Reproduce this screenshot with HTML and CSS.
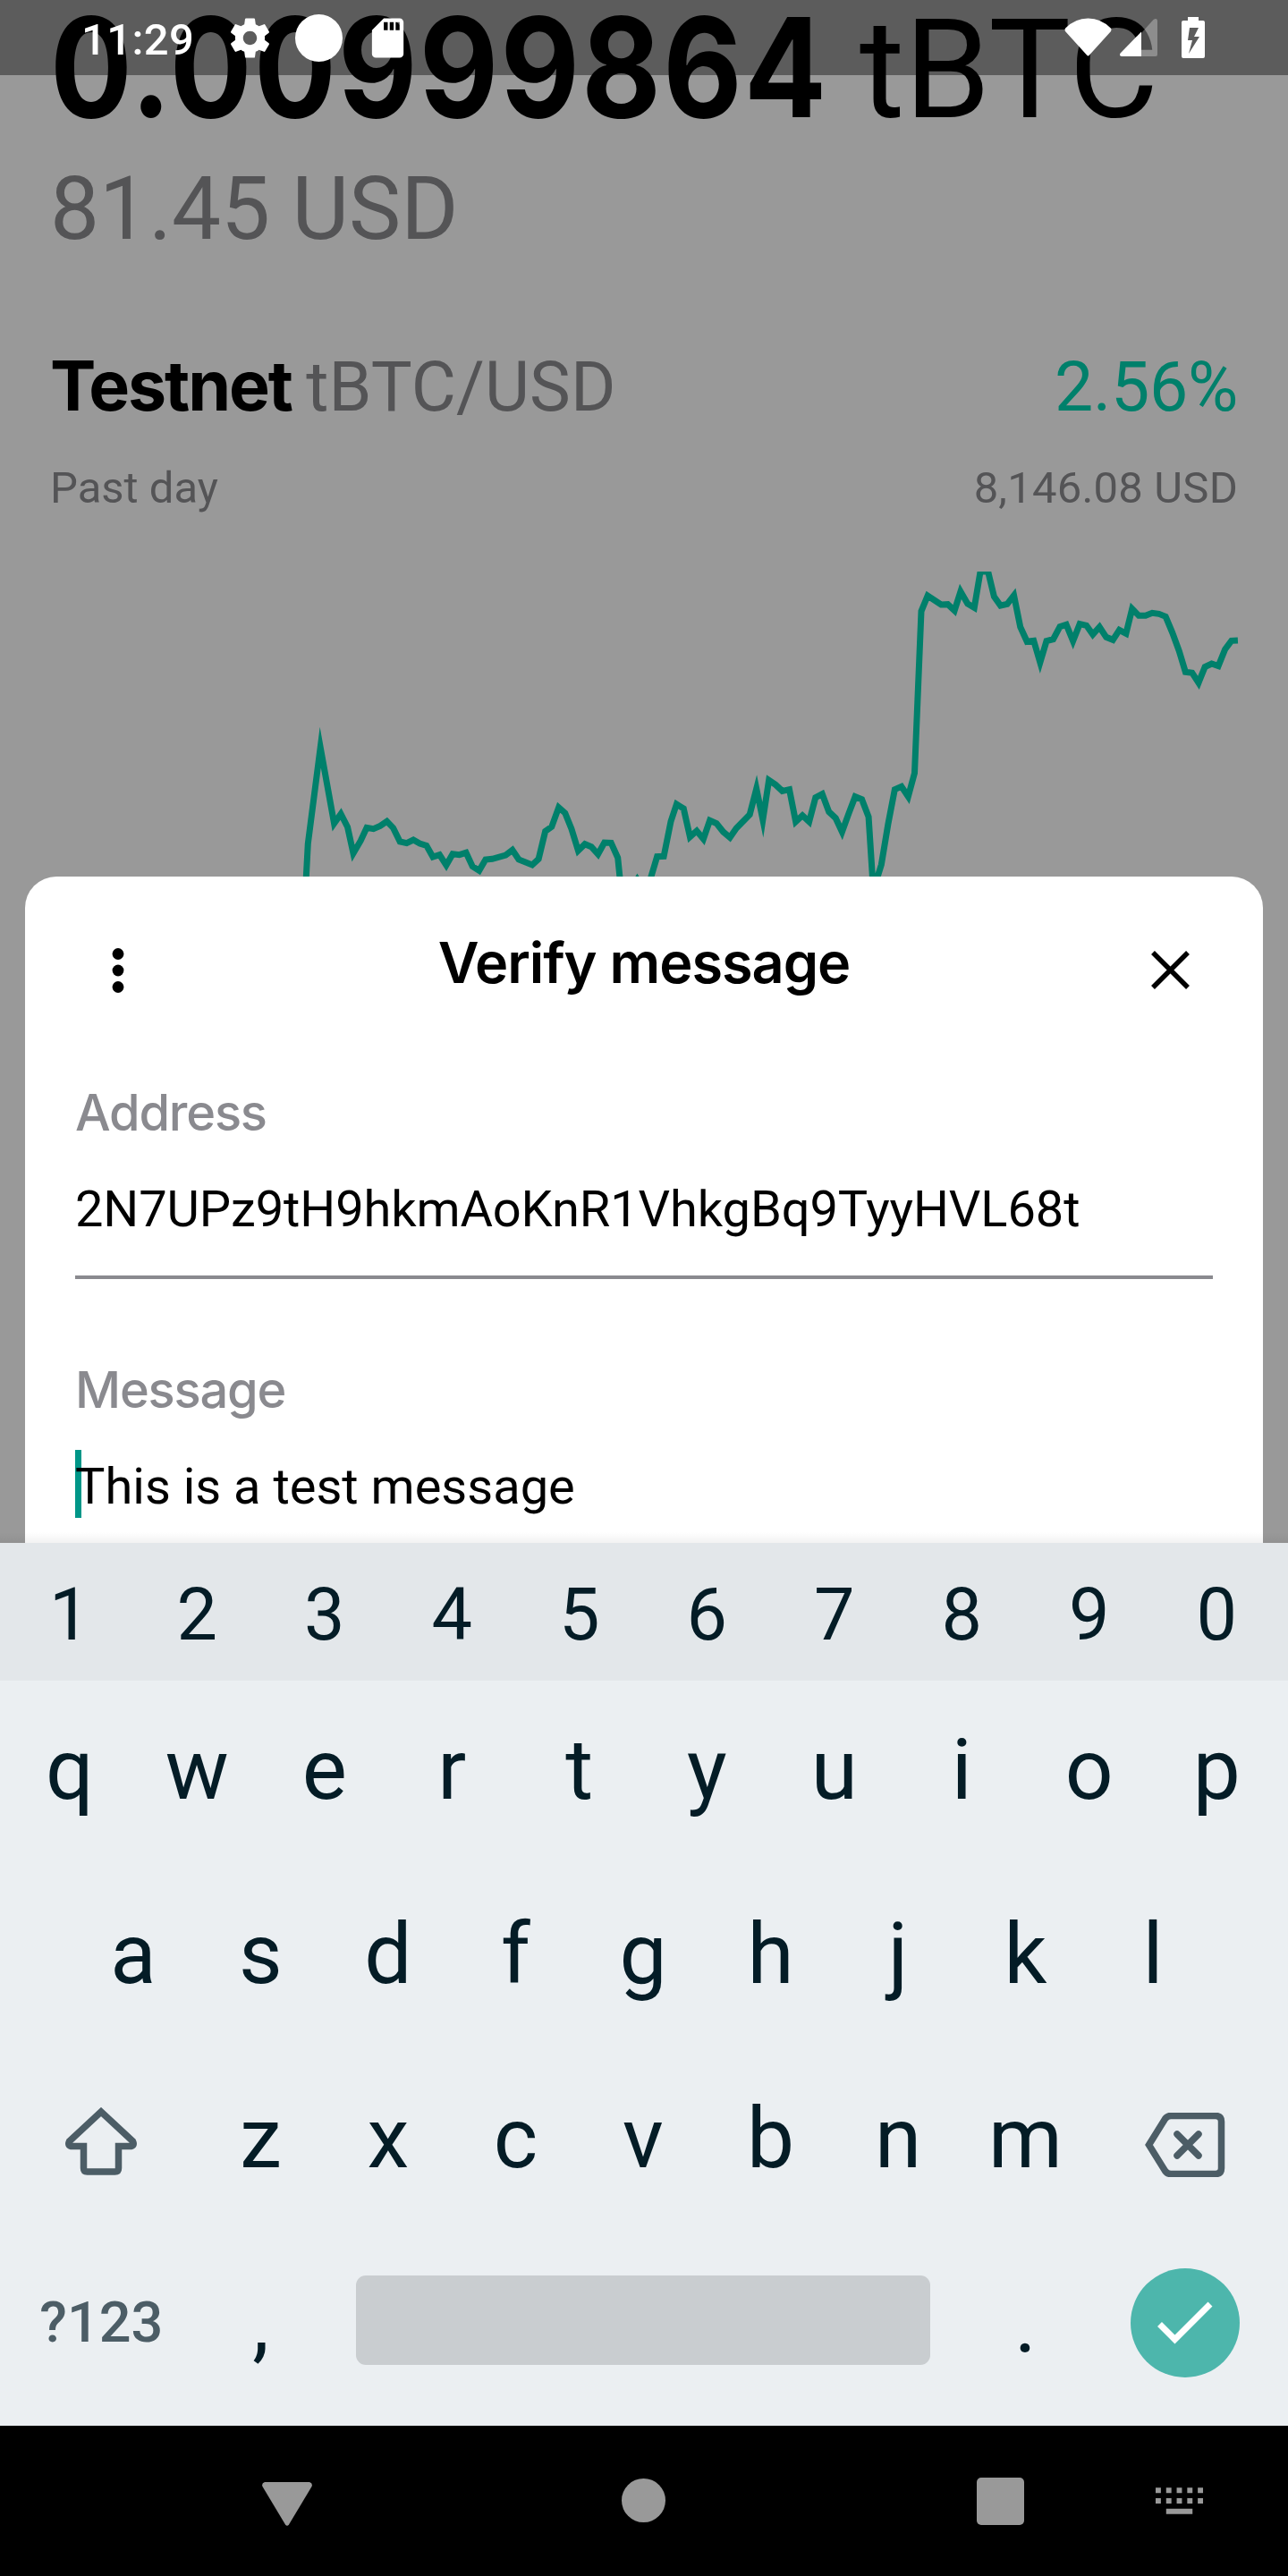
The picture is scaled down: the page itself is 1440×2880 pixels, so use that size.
FILE: index.html
```html
<!DOCTYPE html>
<html lang="en">
<head>
<meta charset="utf-8">
<title>Verify message</title>
<link rel="stylesheet" href="styles.css">
</head>
<body>
<div class="screen">
  <main class="app">
    <section class="wallet">
      <div class="balance"><strong class="amount">0.00999864</strong><span class="unit">tBTC</span></div>
      <div class="fiat">81.45 USD</div>
      <div class="rate">
        <strong class="network">Testnet</strong><span class="pair">tBTC/USD</span><span class="change">2.56%</span>
      </div>
      <div class="period"><span>Past day</span><span class="price">8,146.08 USD</span></div>
      <svg class="chart" viewBox="-2408 57 4032 1023" preserveAspectRatio="none">
        <polyline vector-effect="non-scaling-stroke" points="-1452,1130 -1444,970 -1405,647 -1362,902 -1341,870 -1320,914 -1302,1002 -1279,960 -1260,916 -1239,920 -1218,910 -1197,895 -1177,917 -1156,963 -1135,968 -1114,957 -1094,969 -1073,976 -1053,1014 -1032,1007 -1011,1042 -991,1004 -970,1007 -949,1000 -929,1046 -908,1060 -888,1023 -867,1021 -825,1008 -804,991 -784,1023 -742,1041 -722,1021 -701,928 -681,913 -659,848 -639,867 -619,920 -598,993 -577,971 -557,980 -536,1005 -516,966 -495,967 -474,1017 -466,1100 -440,1140 -413,1090 -390,1130 -371,1085 -351,1013 -330,1012 -308,895 -290,837 -268,852 -248,947 -227,927 -206,954 -186,892 -165,902 -144,930 -123,949 -103,918 -61,872 -40,785 -20,890 -1,757 20,772 41,793 63,788 83,896 104,875 125,896 145,815 166,803 187,863 208,884 228,930 249,868 269,812 290,821 311,880 324,1095 335,1095 351,1040 372,905 393,788 414,778 435,812 455,733 476,190 496,138 538,168 559,167 580,188 599,124 621,165 642,178 661,57 685,57 704,141 724,171 745,166 766,137 786,243 807,292 828,289 848,362 868,290 889,284 910,242 930,235 951,290 972,233 993,238 1013,268 1034,243 1055,277 1076,286 1096,253 1117,265 1136,182 1157,205 1178,205 1199,196 1220,199 1241,208 1262,262 1283,323 1303,394 1324,397 1344,430 1364,377 1385,366 1406,374 1427,318 1447,289 1467,288"/>
      </svg>
    </section>

    <header class="statusbar">
      <span class="time">11:29</span>
      <svg class="gear" viewBox="0 0 24 24"><path d="M19.43 12.98c.04-.32.07-.64.07-.98s-.03-.66-.07-.98l2.11-1.65c.19-.15.24-.42.12-.64l-2-3.46c-.12-.22-.39-.3-.61-.22l-2.49 1c-.52-.4-1.08-.73-1.69-.98l-.38-2.65C14.46 2.18 14.25 2 14 2h-4c-.25 0-.46.18-.49.42l-.38 2.65c-.61.25-1.17.59-1.69.98l-2.49-1c-.23-.09-.49 0-.61.22l-2 3.46c-.13.22-.07.49.12.64l2.11 1.65c-.04.32-.07.65-.07.98s.03.66.07.98l-2.11 1.65c-.19.15-.24.42-.12.64l2 3.46c.12.22.39.3.61.22l2.49-1c.52.4 1.08.73 1.69.98l.38 2.65c.03.24.24.42.49.42h4c.25 0 .46-.18.49-.42l.38-2.65c.61-.25 1.17-.59 1.69-.98l2.49 1c.23.09.49 0 .61-.22l2-3.46c.12-.22.07-.49-.12-.64l-2.11-1.65zM12 15.5c-1.93 0-3.5-1.57-3.5-3.5s1.57-3.5 3.5-3.5 3.5 1.57 3.5 3.5-1.57 3.5-3.5 3.5z"/></svg>
      <span class="dot"></span>
      <svg class="sdcard" viewBox="0 0 24 24"><path d="M18 2h-8L4.02 8 4 20c0 1.1.9 2 2 2h12c1.1 0 2-.9 2-2V4c0-1.1-.9-2-2-2zm-6 6h-2V4h2v4zm3 0h-2V4h2v4zm3 0h-2V4h2v4z"/></svg>
      <svg class="wifi" viewBox="0 0 53 43"><path d="M1.2 11.5Q12 .5 26.5.5T51.800 11.500Q53 13 52 15L28 41.500Q26.500 43.500 25 41.500L1 15Q0 13 1.200 11.500Z"/></svg>
      <svg class="signal" viewBox="0 0 42 42"><path class="faint" d="M24 16 37.500 1Q42-1.500 42 3V40Q42 42 40 42H24Z"/><path d="M24 14.500V42H2Q-1 41.500.6 38.500Z"/></svg>
      <svg class="battery" viewBox="0 0 26 46"><path fill-rule="evenodd" d="M7 0h12v4h5q2 0 2 2v38q0 2-2 2H2q-2 0-2-2V6q0-2 2-2h5zM9 12 7 26h5L8 41 20 22h-6l5-10z"/></svg>
    </header>

    <section class="sheet">
      <div class="sheet-head">
        <svg class="more" viewBox="0 0 14 50"><circle cx="7" cy="6.500" r="6.400"/><circle cx="7" cy="25" r="6.400"/><circle cx="7" cy="43.500" r="6.400"/></svg>
        <h1>Verify message</h1>
        <svg class="close" viewBox="0 0 43 43"><path d="M2 2 41 41M41 2 2 41"/></svg>
      </div>
      <label class="label">Address</label>
      <div class="field address">2N7UPz9tH9hkmAoKnR1VhkgBq9TyyHVL68t</div>
      <label class="label second">Message</label>
      <div class="field"><i class="caret"></i>This is a test message</div>
    </section>
    <div class="shade"></div>
  </main>

  <section class="keyboard">
    <div class="row digits"><b>1</b><b>2</b><b>3</b><b>4</b><b>5</b><b>6</b><b>7</b><b>8</b><b>9</b><b>0</b></div>
    <div class="row"><b>q</b><b>w</b><b>e</b><b>r</b><b>t</b><b>y</b><b>u</b><b>i</b><b>o</b><b>p</b></div>
    <div class="row inset"><b>a</b><b>s</b><b>d</b><b>f</b><b>g</b><b>h</b><b>j</b><b>k</b><b>l</b></div>
    <div class="row">
      <b class="wide"><svg class="shift" viewBox="0 0 80 76"><path d="M40 5 4.500 38Q2 43.500 8 43.500H20.500V68Q20.500 72 24.500 72H55.500Q59.500 72 59.500 68V43.500H72Q78 43.500 75.500 38Z"/></svg></b>
      <b>z</b><b>x</b><b>c</b><b>v</b><b>b</b><b>n</b><b>m</b>
      <b class="wide"><svg class="delete" viewBox="0 0 90 72"><path d="M4.500 36 22.500 7Q25 3.500 29 3.500H79Q85.500 3.500 85.500 10V62Q85.500 68.500 79 68.500H29Q25 68.500 22.500 65Z"/><path d="M36 24 60 48M60 24 36 48"/></svg></b>
    </div>
    <div class="row">
      <b class="wide symbols">?123</b><b>,</b><b class="space"><i></i></b><b>.</b>
      <b class="wide"><span class="enter"><svg viewBox="0 0 64 48"><path d="M3.500 25.500 20.500 42.500 60 3"/></svg></span></b>
    </div>
  </section>

  <nav class="navbar">
    <svg class="back" viewBox="0 0 56 49"><path d="M3 0H53Q57 1.500 55.500 5L30 47.500Q28 50 26 47.500L.5 5Q-1 1.500 3 0Z"/></svg>
    <span class="home"></span>
    <span class="recent"></span>
    <svg class="ime" viewBox="0 0 55 30"><path d="M0 0h6v6H0zm12 0h6v6h-6zm12 0h6v6h-6zm12 0h6v6h-6zm12 0h6v6h-6zM0 12h6v6H0zm12 0h6v6h-6zm12 0h6v6h-6zm12 0h6v6h-6zm12 0h6v6h-6zM12 24h30v6H12z"/></svg>
  </nav>
</div>
</body>
</html>
```
FILE: styles.css
```css
* { box-sizing: border-box; }
body { margin: 0; font-family: Roboto, sans-serif; }
svg { display: block; flex: none; }

.screen { display: flex; flex-direction: column; width: 1440px; height: 2880px; overflow: hidden; }

.app { position: relative; flex: none; height: 1725px; overflow: hidden; background: #999; }

/* wallet screen behind the sheet */
.wallet { display: flex; flex-direction: column; color: #545456; }
.balance { display: flex; align-items: baseline; height: 180px; margin-top: -15px; padding-left: 56px; line-height: 180px; font-size: 154px; color: #000; white-space: nowrap; }
.amount { font-family: Inter, sans-serif; font-weight: 700; letter-spacing: 2.5px; transform: scaleX(.885); transform-origin: left; }
.unit { margin-left: -78.5px; }
.fiat { margin: 9px 56px 0; line-height: 120px; font-size: 98px; }
.rate { display: flex; align-items: baseline; height: 100px; margin: 87px 56px 0; line-height: 100px; font-size: 77px; }
.network { margin-right: 16.4px; font-family: Inter, sans-serif; font-weight: 700; letter-spacing: -2.1px; color: #000; }
.pair { letter-spacing: .15px; }
.change { margin-left: auto; letter-spacing: -.3px; color: #00806b; }
.period { display: flex; justify-content: space-between; margin: 35px 56px 0; line-height: 60px; font-size: 49px; }
.price { letter-spacing: .2px; }
.chart { width: 1440px; height: 341px; margin-top: 63px; overflow: hidden; }
.chart polyline { fill: none; stroke: #00806b; stroke-width: 7; stroke-miterlimit: 20; }

/* status bar */
.statusbar { position: absolute; inset: 0 0 auto; display: flex; align-items: center; height: 84px; padding: 0 93px 0 91px; background: rgba(0, 0, 0, .4); color: #fff; fill: #fff; }
.time { width: 162px; padding-top: 4px; font-size: 49px; font-weight: 500; letter-spacing: .4px; }
.gear { width: 53px; height: 53px; }
.dot { width: 53px; height: 53px; margin: 1px 24px 0; border-radius: 50%; background: #fff; }
.sdcard { width: 53px; height: 53px; }
.wifi { width: 53px; height: 43px; margin: -2px 9px 0 auto; }
.signal { width: 42px; height: 42px; margin-right: 27px; }
.battery { width: 26px; height: 46px; }
.faint { fill: rgba(255, 255, 255, .3); }

/* bottom sheet */
.sheet { position: absolute; z-index: 0; inset: 980px 28px 0; display: flex; flex-direction: column; padding: 56px 56px 0; border-radius: 35px 35px 0 0; background: #fff; }
.sheet > * { flex: none; }
.sheet-head { display: flex; align-items: center; justify-content: space-between; height: 80px; padding: 0 26px 0 41px; }
.more { width: 14px; height: 50px; margin: 18px 14px 0 0; }
.close { width: 43px; height: 43px; margin-top: 17px; fill: none; stroke: #000; stroke-width: 5.5; }
h1 { margin: 0; font: 600 63px/80px Inter, sans-serif; letter-spacing: -1.04px; }
.label { margin: 93px 0 35px; font: 500 56px/70px Inter, sans-serif; letter-spacing: -1.22px; color: #8a8a8f; }
.second { margin-top: 89px; }
.field { position: relative; height: 116px; border-bottom: 4px solid #8a8a8f; line-height: 76px; font-size: 56px; }
.address { letter-spacing: -.1px; }
.caret { position: absolute; z-index: -1; left: 0; top: -3px; width: 7px; height: 76px; background: #009688; }
.shade { position: absolute; z-index: 1; inset: auto 0 0; height: 12px; background: linear-gradient(transparent, rgba(0, 0, 0, .05)); }

/* keyboard */
.keyboard { flex: none; height: 987px; background: #ebeff2; color: #041c26; }
.row { display: flex; height: 206px; padding: 0 6.5px; }
.row b { display: flex; align-items: center; justify-content: center; flex: 0 0 142.5px; height: 200px; font-size: 94.5px; font-weight: 400; line-height: 200px; }
.row.digits { height: 154px; background: #e3e7ea; }
.row.digits b { height: 162px; font-size: 81px; line-height: 162px; }
.row.inset { padding-left: 77.75px; }
.row b.wide { flex-basis: 213.75px; }
.row b.symbols { font-size: 63px; font-weight: 500; color: #4c5d66; }
.row b.space { flex-basis: 712.5px; }
.space i { width: 642px; height: 100px; margin-top: -6px; border-radius: 11px; background: #c9cdd0; }
.shift, .delete { fill: none; stroke: #4c5d66; stroke-width: 7.5; }
.shift { width: 80px; height: 76px; margin-top: 5px; }
.delete { width: 90px; height: 72px; margin-top: 13px; stroke-linecap: round; }
.enter { display: flex; align-items: center; justify-content: center; width: 122px; height: 122px; border-radius: 50%; background: #4db6ac; }
.enter svg { width: 64px; height: 48px; fill: none; stroke: #fff; stroke-width: 7; }

/* navigation bar */
.navbar { display: flex; align-items: center; height: 168px; padding: 0 94px 0 293px; background: #000; fill: #999; }
.back { width: 56px; height: 49px; margin-top: 6px; }
.home { width: 49px; height: 49px; margin: 0 auto 1px 346px; border-radius: 50%; background: #999; }
.recent { width: 53px; height: 53px; margin-right: 147px; border-radius: 5px; background: #999; }
.ime { width: 54px; height: 30px; }
```
